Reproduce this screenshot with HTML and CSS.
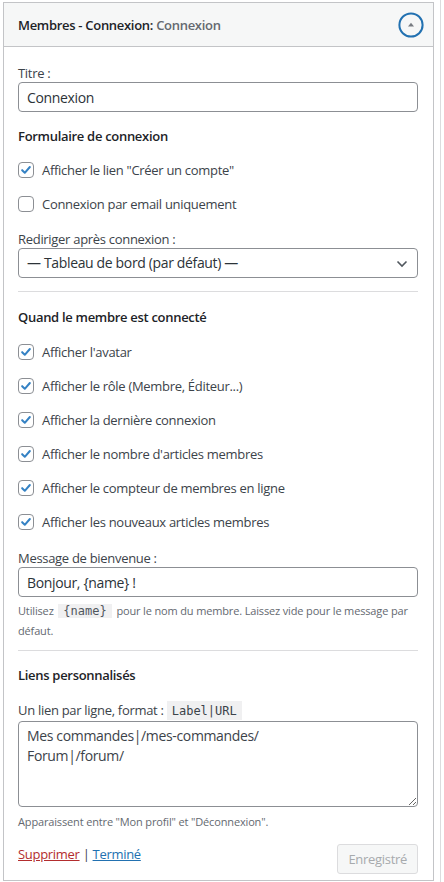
FILE: index.html
```html
<!DOCTYPE html>
<html lang="fr">
<head>
    <meta charset="utf-8">
    <title>Widget Membres - Connexion</title>
    <link rel="stylesheet" href="styles.css">
</head>
<body>
<div class="page">
    <div class="widget">
        <div class="widget-top">
            <h3 class="widget-title">Membres - Connexion:<span class="in-title"> Connexion</span></h3>
            <button class="toggle" type="button" aria-label="Replier">
                <svg width="26" height="26" viewBox="0 0 26 26">
                    <circle cx="13" cy="13" r="11.6" fill="none" stroke="#2271b1" stroke-width="2"/>
                    <path d="M10 14.5 L13 10.8 L16 14.5 Z" fill="#787c82"/>
                </svg>
            </button>
        </div>

        <div class="widget-inside">
            <div class="field">
                <label class="lbl">Titre :</label>
                <input class="text" type="text" value="Connexion">
            </div>

            <h4 class="section">Formulaire de connexion</h4>
            <div class="check"><span class="cb on"><svg viewBox="0 0 16 16"><path d="M3.6 8.2 L6.6 11.2 L12.4 4.6" fill="none" stroke="#3582c4" stroke-width="2.3" stroke-linecap="round" stroke-linejoin="round"/></svg></span>Afficher le lien "Créer un compte"</div>
            <div class="check"><span class="cb"></span>Connexion par email uniquement</div>

            <div class="field">
                <label class="lbl">Rediriger après connexion :</label>
                <div class="select">
                    — Tableau de bord (par défaut) —
                    <svg class="chev" width="12" height="8" viewBox="0 0 12 8"><path d="M1.5 1.5 L6 6 L10.5 1.5" fill="none" stroke="#50575e" stroke-width="1.6"/></svg>
                </div>
            </div>

            <hr class="sep">

            <h4 class="section s2">Quand le membre est connecté</h4>
            <div class="check"><span class="cb on"><svg viewBox="0 0 16 16"><path d="M3.6 8.2 L6.6 11.2 L12.4 4.6" fill="none" stroke="#3582c4" stroke-width="2.3" stroke-linecap="round" stroke-linejoin="round"/></svg></span>Afficher l'avatar</div>
            <div class="check"><span class="cb on"><svg viewBox="0 0 16 16"><path d="M3.6 8.2 L6.6 11.2 L12.4 4.6" fill="none" stroke="#3582c4" stroke-width="2.3" stroke-linecap="round" stroke-linejoin="round"/></svg></span>Afficher le rôle (Membre, Éditeur...)</div>
            <div class="check"><span class="cb on"><svg viewBox="0 0 16 16"><path d="M3.6 8.2 L6.6 11.2 L12.4 4.6" fill="none" stroke="#3582c4" stroke-width="2.3" stroke-linecap="round" stroke-linejoin="round"/></svg></span>Afficher la dernière connexion</div>
            <div class="check"><span class="cb on"><svg viewBox="0 0 16 16"><path d="M3.6 8.2 L6.6 11.2 L12.4 4.6" fill="none" stroke="#3582c4" stroke-width="2.3" stroke-linecap="round" stroke-linejoin="round"/></svg></span>Afficher le nombre d'articles membres</div>
            <div class="check"><span class="cb on"><svg viewBox="0 0 16 16"><path d="M3.6 8.2 L6.6 11.2 L12.4 4.6" fill="none" stroke="#3582c4" stroke-width="2.3" stroke-linecap="round" stroke-linejoin="round"/></svg></span>Afficher le compteur de membres en ligne</div>
            <div class="check"><span class="cb on"><svg viewBox="0 0 16 16"><path d="M3.6 8.2 L6.6 11.2 L12.4 4.6" fill="none" stroke="#3582c4" stroke-width="2.3" stroke-linecap="round" stroke-linejoin="round"/></svg></span>Afficher les nouveaux articles membres</div>

            <div class="field">
                <label class="lbl">Message de bienvenue :</label>
                <input class="text" type="text" value="Bonjour, {name} !">
                <p class="help">Utilisez <code>{name}</code> pour le nom du membre. Laissez vide pour le message par défaut.</p>
            </div>

            <hr class="sep sep2">

            <h4 class="section s3">Liens personnalisés</h4>
            <div class="field">
                <label class="lbl">Un lien par ligne, format : <code class="big">Label|URL</code></label>
                <textarea class="area" rows="4">Mes commandes|/mes-commandes/
Forum|/forum/</textarea>
                <p class="help">Apparaissent entre "Mon profil" et "Déconnexion".</p>
            </div>

            <div class="actions">
                <div class="links"><a class="del" href="#">Supprimer</a> | <a class="done" href="#">Terminé</a></div>
                <button class="save" type="button" disabled>Enregistré</button>
            </div>
        </div>
    </div>
</div>
</body>
</html>
```

FILE: styles.css
```css
html, body{
    margin: 0;
    padding: 0;
    background-color: #fff;
}
body{
    font-family: "Open Sans", "Noto Sans", sans-serif;
    font-size: 13px;
    line-height: 18px;
    letter-spacing: -0.3px;
    color: #2c3338;
}
.page{
    width: 441px;
    min-height: 882px;
    border-right: solid 1px #dcdcde;
    box-sizing: border-box;
    padding: 2px 0 0 3px;
}
.widget{
    width: 431px;
    box-sizing: border-box;
    border: solid 1px #c3c4c7;
    background-color: #fff;
}
.widget-top{
    display: flex;
    align-items: center;
    justify-content: space-between;
    height: 43px;
    padding: 0 8px 0 14px;
    background-color: #f6f7f7;
    border-bottom: solid 1px #c3c4c7;
}
.widget-title{
    margin: 0;
    font-size: 13px;
    font-weight: 600;
    color: #1d2327;
}
.in-title{
    color: #646970;
}
.toggle{
    width: 28px;
    height: 28px;
    padding: 0;
    margin: 0;
    border: 0;
    background: none;
    display: flex;
    align-items: center;
    justify-content: center;
}
.widget-inside{
    padding: 17px 15px 6px 14px;
}
.field{
    margin: 0;
}
.lbl{
    display: block;
    color: #3c434a;
}
.text, .select, .area{
    display: block;
    width: 100%;
    box-sizing: border-box;
    border: solid 1px #8c8f94;
    border-radius: 4px;
    background-color: #fff;
    font-family: inherit;
    font-size: 14px;
    letter-spacing: -0.35px;
    color: #2c3338;
}
.text{
    height: 30px;
    padding: 0 8px;
    margin: 0;
}
.select{
    position: relative;
    height: 30px;
    line-height: 28px;
    padding: 0 24px 0 8px;
}
.chev{
    position: absolute;
    right: 9px;
    top: 11px;
}
.section{
    margin: 15px 0 15px 0;
    font-size: 13px;
    font-weight: 600;
    color: #1d2327;
}
.section.s2{
    margin: 16px 0 16px 0;
}
.section.s3{
    margin: 15px 0 17px 0;
}
.check{
    display: flex;
    align-items: center;
    height: 20px;
    margin-bottom: 14px;
    color: #3c434a;
}
.cb{
    width: 16px;
    height: 16px;
    box-sizing: border-box;
    border: solid 1px #8c8f94;
    border-radius: 4px;
    margin-right: 8px;
    background-color: #fff;
    display: flex;
}
.cb svg{
    width: 14px;
    height: 14px;
}
.check + .field{
    margin-top: 16px;
}
.check + .check + .check + .check + .check + .check + .field{
    margin-top: 17px;
}
.sep{
    border: 0;
    border-top: solid 1px #dcdcde;
    margin: 13px 0 0 0;
}
.sep2{
    margin-top: 10px;
}
.help{
    margin: 4px 0 0 0;
    font-size: 11px;
    line-height: 19px;
    letter-spacing: -0.15px;
    color: #646970;
}
code{
    font-family: "DejaVu Sans Mono", "Liberation Mono", monospace;
    font-size: 12px;
    letter-spacing: 0;
    padding: 0 5px;
    margin: 0 2px;
    background-color: #f0f0f1;
    color: #50575e;
}
code.big{
    padding: 3px 5px 2px 5px;
    margin: 0;
    color: #3c434a;
}
.area{
    height: 86px;
    margin-top: 1px;
    padding: 4px 8px;
    line-height: 20px;
    resize: vertical;
    color: #3c434a;
}
.area + .help{
    margin-top: 5px;
}
.actions{
    display: flex;
    justify-content: space-between;
    align-items: flex-start;
    margin-top: 13px;
}
.links{
    padding-top: 1px;
    color: #3c434a;
}
.del{
    color: #b32d2e;
}
.done{
    color: #2271b1;
}
.save{
    height: 30px;
    margin: 0;
    padding: 0 10px;
    font-family: inherit;
    font-size: 13px;
    letter-spacing: -0.3px;
    color: #a7aaad;
    background-color: #f6f7f7;
    border: solid 1px #dcdcde;
    border-radius: 3px;
}
```
